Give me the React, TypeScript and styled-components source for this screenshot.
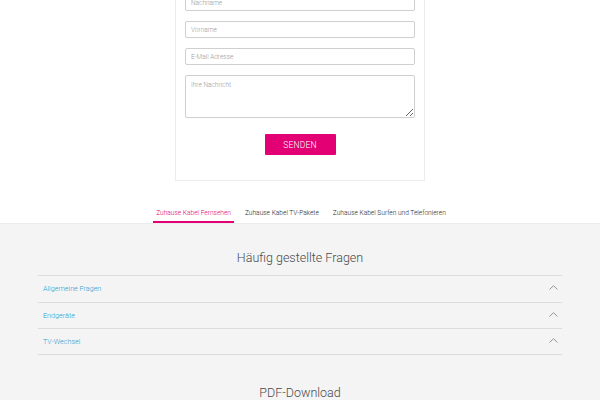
import React from "react";
import styled, { createGlobalStyle } from "styled-components";

const GlobalStyle = createGlobalStyle`
  html, body { margin: 0; padding: 0; background: #fff; }
  body { font-family: Roboto, "Liberation Sans", Arial, sans-serif; }
  * { box-sizing: border-box; }
`;

const Page = styled.div`
  width: 600px;
  height: 400px;
  overflow: hidden;
  display: flex;
  flex-direction: column;
`;

const FormArea = styled.div`
  display: flex;
  justify-content: center;
  margin-top: -17px;
`;

const Card = styled.form`
  width: 250px;
  border: 1px solid #ececec;
  padding: 10px 9px 25px;
  display: flex;
  flex-direction: column;
  gap: 10px;
  background: #fff;
`;

const Field = styled.input`
  height: 17px;
  width: 100%;
  border: 1px solid #cfcfcf;
  border-radius: 2px;
  padding: 0 5px;
  font-family: inherit;
  font-size: 6.5px;
  font-weight: 300;
  color: #333;
  background: #fff;
  &::placeholder { color: #9a9a9a; }
`;

const Message = styled.textarea`
  height: 43px;
  width: 100%;
  border: 1px solid #cfcfcf;
  border-radius: 2px;
  padding: 5px;
  font-family: inherit;
  font-size: 6.5px;
  font-weight: 300;
  resize: vertical;
  &::placeholder { color: #9a9a9a; }
`;

const SubmitButton = styled.button`
  align-self: center;
  margin-top: 6px;
  width: 71px;
  height: 21px;
  border: none;
  border-radius: 1px;
  background: #e20074;
  color: #fff;
  font-family: inherit;
  font-size: 8.5px;
  font-weight: 300;
  letter-spacing: 0.2px;
`;

const TabBar = styled.nav`
  display: flex;
  justify-content: center;
  gap: 8px;
  margin-top: 22px;
  padding-left: 2px;
  border-bottom: 1px solid #ececec;
`;

const Tab = styled.a<{ $active?: boolean }>`
  padding: 6px 3px 3px;
  font-size: 6.6px;
  font-weight: 300;
  line-height: 9px;
  color: ${(p) => (p.$active ? "#e20074" : "#1e1e1e")};
  border-bottom: 2px solid ${(p) => (p.$active ? "#e20074" : "transparent")};
  white-space: nowrap;
`;

const GraySection = styled.section`
  flex: 1;
  background: #f4f4f4;
  display: flex;
  flex-direction: column;
  align-items: center;
`;

const SectionTitle = styled.h2<{ $top: number }>`
  margin: ${(p) => p.$top}px 0 0;
  font-size: 12.5px;
  line-height: 16px;
  font-weight: 300;
  color: #4a4a4a;
`;

const Accordion = styled.div`
  width: 524px;
  margin-top: 9px;
  border-bottom: 1px solid #dcdcdc;
`;

const AccordionRow = styled.div`
  height: 26.5px;
  border-top: 1px solid #dcdcdc;
  display: flex;
  align-items: center;
  justify-content: space-between;
  padding: 0 4px 0 5px;
  &:last-child { height: 25.5px; }
`;

const RowLabel = styled.span`
  font-size: 7.2px;
  font-weight: 300;
  color: #2a9dd3;
`;

const Chevron = () => (
  <svg width="9" height="5" viewBox="0 0 9 5" style={{ marginBottom: 2 }}>
    <path d="M0.5 4.5 L4.5 0.7 L8.5 4.5" fill="none" stroke="#8a8a8a" strokeWidth="0.9" />
  </svg>
);

const faqs = ["Allgemeine Fragen", "Endgeräte", "TV-Wechsel"];

export default function App() {
  return (
    <>
      <GlobalStyle />
      <Page>
        <FormArea>
          <Card onSubmit={(e) => e.preventDefault()}>
            <Field placeholder="Nachname" />
            <Field placeholder="Vorname" />
            <Field placeholder="E-Mail Adresse" />
            <Message placeholder="Ihre Nachricht" />
            <SubmitButton type="submit">SENDEN</SubmitButton>
          </Card>
        </FormArea>
        <TabBar>
          <Tab $active>Zuhause Kabel Fernsehen</Tab>
          <Tab>Zuhause Kabel TV-Pakete</Tab>
          <Tab>Zuhause Kabel Surfen und Telefonieren</Tab>
        </TabBar>
        <GraySection>
          <SectionTitle $top={26}>Häufig gestellte Fragen</SectionTitle>
          <Accordion>
            {faqs.map((f) => (
              <AccordionRow key={f}>
                <RowLabel>{f}</RowLabel>
                <Chevron />
              </AccordionRow>
            ))}
          </Accordion>
          <SectionTitle $top={30}>PDF-Download</SectionTitle>
        </GraySection>
      </Page>
    </>
  );
}
